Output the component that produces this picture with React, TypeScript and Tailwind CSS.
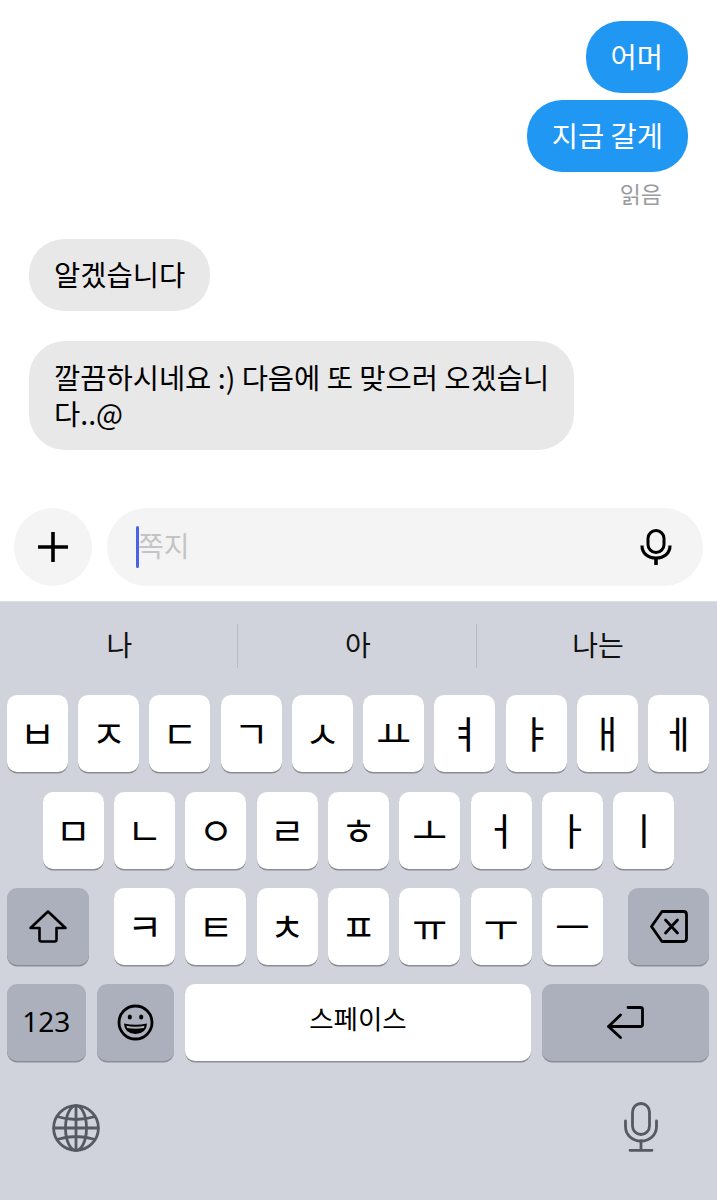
import type { ReactNode } from "react";

const FONT = "font-['Noto_Sans_CJK_KR','Noto_Sans',sans-serif]";

const ROW_ONE = ["ㅂ", "ㅈ", "ㄷ", "ㄱ", "ㅅ", "ㅛ", "ㅕ", "ㅑ", "ㅐ", "ㅔ"];
const ROW_TWO = ["ㅁ", "ㄴ", "ㅇ", "ㄹ", "ㅎ", "ㅗ", "ㅓ", "ㅏ", "ㅣ"];
const ROW_THREE = ["ㅋ", "ㅌ", "ㅊ", "ㅍ", "ㅠ", "ㅜ", "ㅡ"];

function LetterKey({ label }: { label: string }) {
    return (
        <div className="flex h-[77px] w-[61px] shrink-0 items-center justify-center rounded-[10px] bg-white pb-[3px] text-[38px] leading-none text-black shadow-[0_1.5px_0_#8b8e96]">
            {label}
        </div>
    );
}

function FnKey({ className, children }: { className: string; children: ReactNode }) {
    return (
        <div
            className={`flex h-[77px] shrink-0 items-center justify-center rounded-[10px] bg-[#abb0bc] text-black shadow-[0_1.5px_0_#8b8e96] ${className}`}
        >
            {children}
        </div>
    );
}

function ShiftIcon() {
    return (
        <svg width="38" height="33" viewBox="0 0 38 33" fill="none" stroke="#000" strokeWidth="2.6" strokeLinejoin="round">
            <path d="M19 1.5 36.5 18H27.5V29.5Q27.5 31.5 25.5 31.5H12.5Q10.5 31.5 10.5 29.5V18H1.5Z" />
        </svg>
    );
}

function BackspaceIcon() {
    return (
        <svg width="38" height="33" viewBox="0 0 38 33" fill="none" stroke="#000" strokeWidth="2.8" strokeLinejoin="round" strokeLinecap="round">
            <path d="M12 1.5H33.5Q36.5 1.5 36.5 4.5V28.5Q36.5 31.5 33.5 31.5H12L1.5 16.5Z" />
            <path d="M15.5 10 27.5 23M27.5 10 15.5 23" />
        </svg>
    );
}

function ReturnIcon() {
    return (
        <svg width="37" height="33" viewBox="0 0 37 33" fill="none" stroke="#000" strokeWidth="2.8" strokeLinejoin="round" strokeLinecap="round">
            <path d="M21 1.5H33.5Q35.5 1.5 35.5 3.500V18.500Q35.5 20.5 33.500 20.5H2" />
            <path d="M13.5 9 1.5 20.5 13.5 31.5" />
        </svg>
    );
}

function EmojiIcon() {
    return (
        <svg width="37" height="37" viewBox="0 0 37 37" fill="none">
            <circle cx="18.5" cy="18.5" r="16.5" stroke="#000" strokeWidth="2.8" />
            <ellipse cx="12.8" cy="13" rx="2.1" ry="2.6" fill="#000" />
            <ellipse cx="24.2" cy="13" rx="2.1" ry="2.6" fill="#000" />
            <path d="M7 19.5Q18.5 22 30 19.5Q29.5 29.5 18.5 30Q7.5 29.5 7 19.5Z" fill="#000" />
            <path d="M9.5 21.7Q18.5 23.6 27.5 21.7L27 24Q18.5 25.6 10 24Z" fill="#abb0bc" />
        </svg>
    );
}

function GlobeIcon() {
    return (
        <svg className="mt-[2px]" width="48" height="48" viewBox="0 0 48 48" fill="none" stroke="#555962" strokeWidth="2.8">
            <circle cx="24" cy="24" r="22.4" />
            <ellipse cx="24" cy="24" rx="10.5" ry="22.4" />
            <path d="M24 1.6V46.4M1.6 24H46.4M5 12.5Q24 18.5 43 12.5M5 35.5Q24 29.5 43 35.5" />
        </svg>
    );
}

function DictationIcon() {
    return (
        <svg width="34" height="50" viewBox="0 0 34 50" fill="none" stroke="#555962" strokeWidth="2.8" strokeLinecap="round">
            <rect x="8.5" y="1.5" width="17" height="31" rx="8.5" />
            <path d="M1.5 19V24.5C1.5 33 8.5 39 17 39S32.500 33 32.500 24.5V19" />
            <path d="M17 39V48M6 48.300H28" />
        </svg>
    );
}

function InputMicIcon() {
    return (
        <svg width="32" height="36" viewBox="0 0 32 36" fill="none" stroke="#000" strokeLinecap="butt">
            <rect x="8" y="1.500" width="16" height="22" rx="8" strokeWidth="3" />
            <path d="M2 16.500C2 24.500 8 29 16 29S30 24.500 30 16.500" strokeWidth="3.200" />
            <path d="M16 29V36" strokeWidth="3.600" />
        </svg>
    );
}

export default function App() {
    return (
        <div className={`flex h-[1200px] w-[717px] flex-col overflow-hidden bg-white ${FONT}`}>
            {/* Conversation */}
            <div className="flex h-[508px] shrink-0 flex-col px-[29px] pt-[21px]">
                <div className="flex flex-col items-end gap-[7px]">
                    <div className="flex h-[72px] items-center rounded-[35px] bg-[#2097f3] px-[25px] pb-[2px] text-[28.5px] text-white">
                        어머
                    </div>
                    <div className="flex h-[72px] items-center rounded-[35px] bg-[#2097f3] px-[25px] pb-[2px] text-[28.5px] text-white">
                        지금 갈게
                    </div>
                    <div className="mr-[26px] text-[23px] leading-[28px] text-[#9b9b9f]">읽음</div>
                </div>
                <div className="mt-[32px] flex flex-col items-start gap-[30px]">
                    <div className="flex h-[72px] items-center rounded-[35px] bg-[#e8e8e8] px-[25px] pb-[2px] text-[28.5px] text-black">
                        알겠습니다
                    </div>
                    <div className="flex h-[109px] w-[545px] items-center rounded-[36px] bg-[#e8e8e8] px-[25px] pb-[2px] text-[28.5px] leading-[36px] whitespace-nowrap text-black">
                        <p>
                            깔끔하시네요 :) 다음에 또 맞으러 오겠습니
                            <br />
                            다..@
                        </p>
                    </div>
                </div>
            </div>

            {/* Composer */}
            <div className="flex h-[93px] shrink-0 gap-[15px] px-[14px]">
                <div className="flex h-[78px] w-[78px] shrink-0 items-center justify-center rounded-full bg-[#f4f4f4]">
                    <svg width="32" height="32" viewBox="0 0 32 32" stroke="#000" strokeWidth="3.600">
                        <path d="M16 1V31M1 16H31" />
                    </svg>
                </div>
                <div className="flex h-[78px] flex-1 items-center rounded-[39px] bg-[#f4f4f4] pl-[29px] pr-[31px]">
                    <span className="h-[42px] w-[3px] rounded-full bg-[#4a63e0]" />
                    <span className="-ml-[1px] pb-[4px] text-[28px] leading-none text-[#c4c4c6]">쪽지</span>
                    <span className="ml-auto flex">
                        <InputMicIcon />
                    </span>
                </div>
            </div>

            {/* Keyboard */}
            <div className="flex flex-1 flex-col border-t border-[#dcdee3] bg-[#d0d3db]">
                <div className="flex h-[93px] shrink-0 items-center pb-[6px] text-[28px] text-[#111]">
                    <div className="flex h-[44px] w-[238px] items-center justify-center border-r border-[#b9bcc5] pb-[3px] pl-[2px]">나</div>
                    <div className="flex h-[44px] w-[239px] items-center justify-center border-r border-[#b9bcc5] pb-[3px] pl-[2px]">아</div>
                    <div className="flex h-[44px] flex-1 items-center justify-center pb-[3px] pl-[2px]">나는</div>
                </div>

                <div className="flex flex-col gap-[19.5px] pl-[7px] pr-[8px]">
                    <div className="flex justify-between">
                        {ROW_ONE.map((k) => (
                            <LetterKey key={k} label={k} />
                        ))}
                    </div>
                    <div className="flex justify-center gap-[10.3px] pl-[1px]">
                        {ROW_TWO.map((k) => (
                            <LetterKey key={k} label={k} />
                        ))}
                    </div>
                    <div className="flex items-center justify-between">
                        <FnKey className="w-[82px]">
                            <ShiftIcon />
                        </FnKey>
                        <div className="flex gap-[10.3px]">
                            {ROW_THREE.map((k) => (
                                <LetterKey key={k} label={k} />
                            ))}
                        </div>
                        <FnKey className="w-[81px]">
                            <BackspaceIcon />
                        </FnKey>
                    </div>
                </div>

                <div className="mt-[19px] flex gap-[11px] pl-[7px] pr-[8px]">
                    <FnKey className="w-[78.5px] pb-[3px] font-['Noto_Sans',sans-serif] text-[28px]">123</FnKey>
                    <FnKey className="w-[77.5px]">
                        <EmojiIcon />
                    </FnKey>
                    <div className="flex h-[77px] w-[346px] shrink-0 items-center justify-center rounded-[10px] bg-white pb-[9px] text-[26.5px] text-black shadow-[0_1.5px_0_#8b8e96]">
                        스페이스
                    </div>
                    <FnKey className="flex-1">
                        <ReturnIcon />
                    </FnKey>
                </div>

                <div className="flex items-start justify-between pl-[52px] pr-[59px] pt-[41px]">
                    <GlobeIcon />
                    <DictationIcon />
                </div>
            </div>
        </div>
    );
}
